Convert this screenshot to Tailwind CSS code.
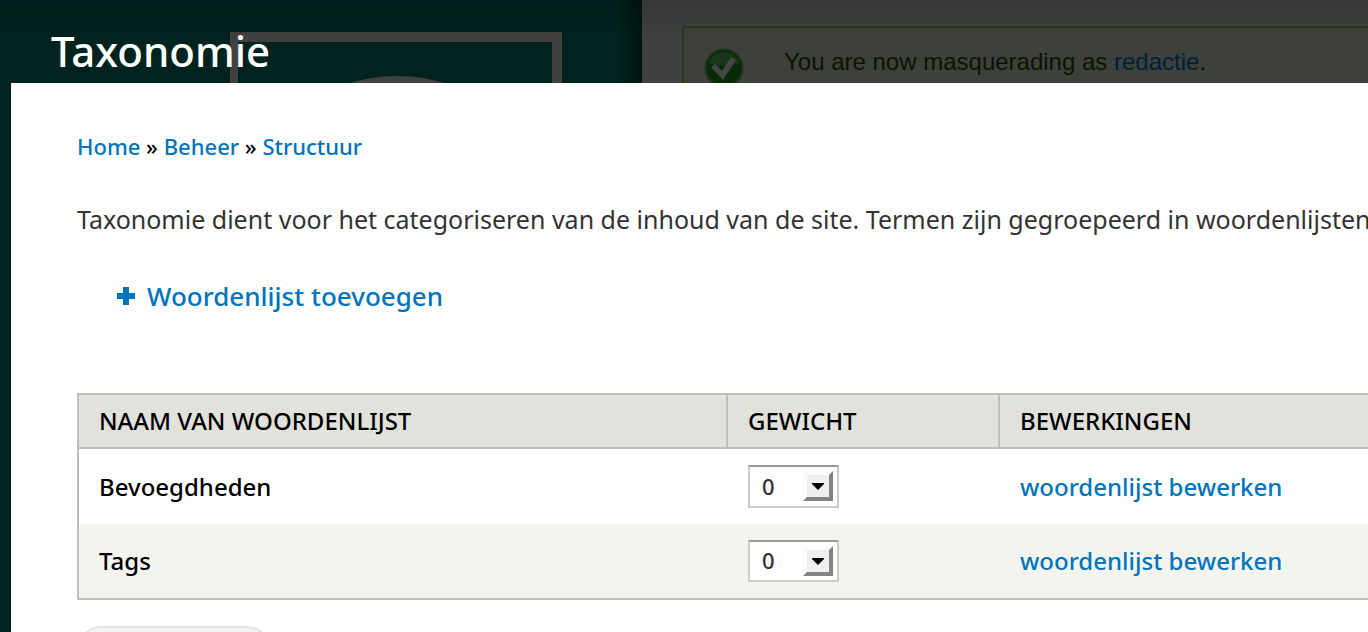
<!DOCTYPE html>
<html lang="nl">
<head>
<meta charset="utf-8">
<title>Taxonomie</title>
<script src="https://cdn.jsdelivr.net/npm/@tailwindcss/browser@4"></script>
</head>
<body class="relative h-screen overflow-hidden bg-[#00231f] font-['Noto_Sans',sans-serif] text-2xl text-black">

<!-- Dimmed page behind the overlay -->
<div class="absolute inset-0 flex overflow-hidden">
  <div class="flex w-[642px] shrink-0 items-start bg-linear-to-r from-[#00231f] from-96% to-[#001512] pl-[230px] pt-8">
    <svg class="h-[332px] w-[332px]" viewBox="0 0 332 332" aria-hidden="true">
      <path fill="#414041" fill-rule="evenodd" d="M0 0H332V332H0ZM8 10V322H322V10Z"/>
      <ellipse cx="167" cy="164" rx="140" ry="120" fill="#414041"/>
    </svg>
  </div>
  <div class="min-w-0 grow bg-[#404040] pl-10 pt-[26px]">
    <div class="-mr-1 flex h-32 items-start border-2 border-[#2c3a1c] bg-[#3e403a] pl-5 pt-5 font-['Liberation_Sans',Arial,sans-serif] text-[#0a1404]">
      <svg class="size-10 shrink-0" viewBox="0 0 40 40" aria-hidden="true">
        <circle cx="20" cy="20" r="19.5" fill="#1a361c"/>
        <circle cx="20" cy="20" r="17.5" fill="#072a08"/>
        <path fill="#17361a" d="M4 15a17 17 0 0 1 32 0Q20 21 4 15Z"/>
        <path fill="#434643" d="M7 19l4-3 7 7 9-14 5 3-13 20Z"/>
      </svg>
      <p class="ml-10 -mt-0.5 leading-8">You are now masquerading as <a href="#" class="text-[#001f3b]">redactie</a>.</p>
    </div>
  </div>
</div>
<div class="pointer-events-none absolute inset-x-0 top-0 h-10 bg-linear-to-b from-black/15 to-black/0"></div>

<!-- Overlay -->
<main class="relative flex h-full flex-col pl-[11px]">
  <h1 class="h-[83px] shrink-0 pl-10 pt-6 text-[42px] leading-[54px] font-medium text-white">Taxonomie</h1>
  <div class="min-h-0 grow overflow-hidden bg-white pl-[66px] pt-[47px]">
    <nav aria-label="Kruimelpad" class="text-[22px] leading-8 font-medium">
      <a href="#" class="text-[#0074bd]">Home</a> » <a href="#" class="text-[#0074bd]">Beheer</a> » <a href="#" class="text-[#0074bd]">Structuur</a>
    </nav>
    <p class="mt-[39px] whitespace-nowrap text-[25px] leading-9 text-[#333]">Taxonomie dient voor het categoriseren van de inhoud van de site. Termen zijn gegroepeerd in woordenlijsten</p>
    <a href="#" class="mt-[41px] ml-10 inline-flex items-center gap-3 text-[26px] leading-9 font-medium text-[#0074bd]">
      <svg class="size-[18px]" viewBox="0 0 18 18" fill="currentColor" aria-hidden="true"><path d="M6 0h6v6h6v6h-6v6H6v-6H0V6h6Z"/></svg>
      Woordenlijst toevoegen
    </a>
    <table class="mt-[79px] w-full table-fixed border-collapse border-2 border-r-0 border-[#bebfb9] text-left">
      <thead class="bg-[#e1e2dc] text-2xl uppercase">
        <tr class="h-[54px] border-b-2 border-[#bebfb9]">
          <th scope="col" class="w-[649px] px-5 font-medium">Naam van woordenlijst</th>
          <th scope="col" class="w-[272px] border-l-2 border-[#bebfb9] px-5 font-medium">Gewicht</th>
          <th scope="col" class="border-l-2 border-[#bebfb9] px-5 font-medium">Bewerkingen</th>
        </tr>
      </thead>
      <tbody class="font-medium">
        <tr class="h-[76px]">
          <td class="px-5">Bevoegdheden</td>
          <td class="px-[21px]">
            <div class="relative w-[91px]">
              <select aria-label="Gewicht voor Bevoegdheden" class="block h-[43px] w-full appearance-none border-2 border-[#ccc] border-t-[#999] bg-white pl-3 text-[22px] text-[#333]"><option>0</option></select>
              <span class="pointer-events-none absolute top-[6px] right-[6px] flex size-[30px] items-center justify-center border-4 border-t-[#fafafa] border-l-[#fafafa] border-r-[#848484] border-b-[#848484] bg-[#efefef]">
                <svg class="h-[7px] w-3" viewBox="0 0 12 7" aria-hidden="true"><path d="M0 0H12V1L6 7L0 1Z"/></svg>
              </span>
            </div>
          </td>
          <td class="px-[21px]"><a href="#" class="text-[#0074bd]">woordenlijst bewerken</a></td>
        </tr>
        <tr class="h-[75px] bg-[#f3f4ee]">
          <td class="px-5">Tags</td>
          <td class="px-[21px]">
            <div class="relative w-[91px]">
              <select aria-label="Gewicht voor Tags" class="block h-[42px] w-full appearance-none border-2 border-[#ccc] border-t-[#999] bg-white pl-3 text-[22px] text-[#333]"><option>0</option></select>
              <span class="pointer-events-none absolute top-[6px] right-[6px] flex size-[30px] items-center justify-center border-4 border-t-[#fafafa] border-l-[#fafafa] border-r-[#848484] border-b-[#848484] bg-[#efefef]">
                <svg class="h-[7px] w-3" viewBox="0 0 12 7" aria-hidden="true"><path d="M0 0H12V1L6 7L0 1Z"/></svg>
              </span>
            </div>
          </td>
          <td class="px-[21px]"><a href="#" class="text-[#0074bd]">woordenlijst bewerken</a></td>
        </tr>
      </tbody>
    </table>
    <button type="button" aria-label="Opslaan" class="mt-[26px] block h-12 w-[194px] rounded-full border-2 border-[#e4e4e4] bg-[#f3f3f3]"></button>
  </div>
</main>
</body>
</html>
